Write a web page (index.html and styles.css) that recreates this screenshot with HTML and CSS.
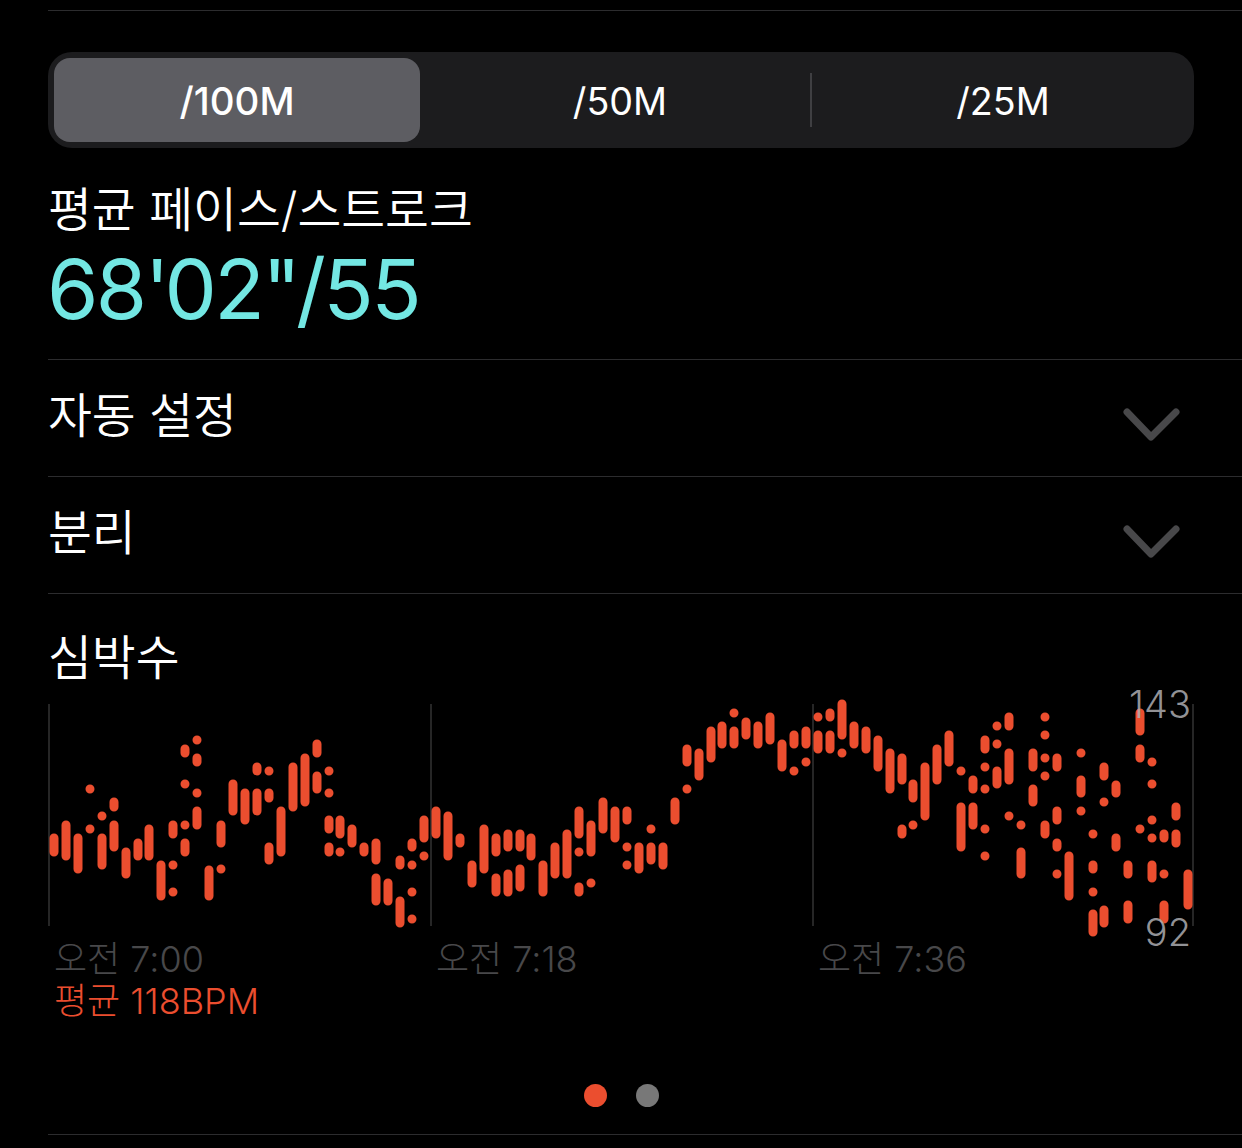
FILE: index.html
```html
<!DOCTYPE html>
<html lang="ko">
<head>
  <meta charset="UTF-8" />
  <meta name="viewport" content="width=device-width, initial-scale=1.0"/>
  <title>수영 기록</title>
  <link rel="stylesheet" href="styles.css">
</head>
<body>
  <div class="page">
    <section class="pace">
      <div class="tabs">
        <div class="tab tab-on">/100M</div>
        <div class="tab tab-mid">/50M</div>
        <div class="tab">/25M</div>
      </div>
      <div class="stat-label">평균 페이스/스트로크</div>
      <div class="stat-value">68<span class="prime">'</span>02<span class="prime">"</span>/55</div>
    </section>

    <section class="row">
      <span>자동 설정</span>
      <svg class="chevron" viewBox="0 0 58 34"><path d="M5 4L29 29L54 4"/></svg>
    </section>

    <section class="row">
      <span>분리</span>
      <svg class="chevron" viewBox="0 0 58 34"><path d="M5 4L29 29L54 4"/></svg>
    </section>

    <section class="heart">
      <h2>심박수</h2>
      <div class="chart">
        <svg class="plot" viewBox="48 704 1146 222">
          <path class="grid-lines" d="M49 704V926M431 704V926M813 704V926M1193 704V926"/>
          <path class="beats" d="M54 838V852M66 825V856M78 838V869M90 789h0M90 829h0M102 816h0M102 838V865M114 802V807M114 825V847M126 852V874M138 843V856M149 829V856M161 865V896M173 825V834M173 865h0M173 892h0M185 749V753M185 784h0M185 825h0M185 843V852M197 740h0M197 758V762M197 793h0M197 811V825M209 870V896M221 825V843M221 869h0M233 784V811M245 793V820M257 767V771M257 793V811M269 771h0M269 793V798M269 847V860M281 811V852M293 767V807M305 758V802M317 744V753M317 776V789M329 771h0M329 793h0M329 820V829M329 847V852M340 820V834M340 852h0M352 829V843M364 847V852M376 843V860M376 878V901M388 883V901M400 860V865M400 901V923M412 843V847M412 865h0M412 892h0M412 919h0M424 820V838M424 856h0M436 811V834M448 816V856M460 838V843M472 865V883M484 829V869M496 838V852M496 878V892M508 834V847M508 874V892M520 834V847M520 869V887M531 838V856M543 865V892M555 847V874M567 834V874M579 811V834M579 852h0M579 887V892M591 825V852M591 883h0M603 802V829M615 811V838M627 811V820M627 847h0M627 865h0M639 847V869M651 829h0M651 847V860M663 847V865M675 802V820M687 749V762M687 789h0M699 753V776M711 731V758M722 726V744M734 713h0M734 731V744M746 722V735M758 726V744M770 717V740M782 744V767M794 735V744M794 771h0M806 731V744M806 762h0M818 717h0M818 735V749M830 713V717M830 735V749M842 704V735M842 753h0M854 726V744M866 731V749M878 740V767M890 753V789M902 758V780M902 829V834M913 784V798M913 825h0M925 767V816M937 749V780M949 735V762M961 771h0M961 807V847M973 780V789M973 807V825M985 740V749M985 767h0M985 789h0M985 829h0M985 856h0M997 726h0M997 744h0M997 771V784M1009 717V726M1009 753V780M1009 816h0M1021 825h0M1021 852V874M1033 753V767M1033 789V802M1045 717h0M1045 735h0M1045 758h0M1045 776h0M1045 825V834M1057 758V767M1057 811V820M1057 843V847M1057 874h0M1069 856V896M1081 753h0M1081 780V793M1081 811h0M1093 834h0M1093 865V869M1093 892h0M1093 914V932M1104 767V776M1104 802h0M1104 910V923M1116 785V793M1116 838V847M1128 865V874M1128 905V919M1140 713V731M1140 749V758M1140 829h0M1152 762h0M1152 784h0M1152 820h0M1152 838h0M1152 865V878M1164 834V838M1164 874h0M1164 905V919M1176 807V816M1176 834V843M1188 874V905"/>
        </svg>
        <span class="y-max">143</span>
        <span class="y-min">92</span>
      </div>
      <div class="times">
        <span>오전 7:00</span>
        <span>오전 7:18</span>
        <span>오전 7:36</span>
      </div>
      <div class="avg">평균 118BPM</div>
      <div class="pager">
        <span class="dot dot-on"></span>
        <span class="dot"></span>
      </div>
    </section>
  </div>
</body>
</html>
```

FILE: styles.css
```css
html, body {
  margin: 0;
  background: #000;
}

body {
  font-family: Inter, "Noto Sans CJK KR", sans-serif;
  color: #fff;
}

.page {
  height: 1148px;
  padding: 10px 0 0 48px;
  box-sizing: border-box;
  overflow: hidden;
}

.pace {
  height: 349px;
  border-top: 1px solid #2c2c2e;
  box-sizing: border-box;
}

.tabs {
  width: 1146px;
  height: 96px;
  margin-top: 41px;
  display: grid;
  grid-template-columns: repeat(3, 1fr);
  background: #1c1c1e;
  border-radius: 24px;
}

.tab {
  display: flex;
  align-items: center;
  justify-content: center;
  padding-top: 2px;
  box-sizing: border-box;
  font-size: 37.7px;
  position: relative;
}

.tab-on {
  margin: 6px 10px 6px 6px;
  background: #5d5d62;
  border-radius: 16px;
  font-size: 38.5px;
  font-weight: 500;
}

.tab-mid {
  padding-right: 2px;
}

.tab-mid::after {
  content: "";
  position: absolute;
  right: 0;
  top: 21px;
  bottom: 21px;
  width: 2px;
  background: #3f3f42;
}

.stat-label {
  margin-top: 29px;
  font-size: 47.7px;
  line-height: 67px;
  font-weight: 350;
}

.stat-value {
  margin-left: -1px;
  font-size: 83px;
  line-height: 90px;
  font-weight: 400;
  letter-spacing: -2.6px;
  color: #73e7e3;
}

.prime {
  letter-spacing: -9px;
  margin-right: 4px;
}

.row {
  height: 117px;
  padding-right: 62px;
  border-top: 1px solid #2c2c2e;
  box-sizing: border-box;
  display: flex;
  align-items: center;
  justify-content: space-between;
  font-size: 47.7px;
  font-weight: 350;
}

.row span {
  margin-top: -11px;
}

.chevron {
  width: 58px;
  height: 34px;
  margin-top: 14px;
}

.chevron path {
  fill: none;
  stroke: #48484a;
  stroke-width: 7;
  stroke-linecap: round;
  stroke-linejoin: round;
}

.heart {
  height: 541px;
  border-top: 1px solid #2c2c2e;
  box-sizing: border-box;
}

.heart h2 {
  margin: 29px 0 0;
  font-size: 47.7px;
  line-height: 70px;
  font-weight: 350;
}

.chart {
  position: relative;
  width: 1146px;
  height: 222px;
  margin-top: 11px;
}

.plot {
  display: block;
  width: 1146px;
  height: 222px;
  overflow: visible;
}

.grid-lines {
  fill: none;
  stroke: #333;
  stroke-width: 1.5;
}

.beats {
  fill: none;
  stroke: #eb4e2f;
  stroke-width: 9;
  stroke-linecap: round;
}

.y-max, .y-min {
  position: absolute;
  right: 3px;
  font-size: 38px;
  font-weight: 300;
  line-height: 40px;
  color: rgba(174, 174, 178, 0.85);
}

.y-max {
  top: -20px;
}

.y-min {
  top: 208px;
}

.times {
  width: 1146px;
  display: grid;
  grid-template-columns: repeat(3, 382px);
  margin-top: 12px;
  font-size: 36px;
  line-height: 42px;
  font-weight: 300;
  color: #48484a;
}

.times span {
  padding-left: 6px;
}

.avg {
  padding-left: 6px;
  font-size: 36px;
  line-height: 42px;
  font-weight: 300;
  color: #eb4e2f;
}

.pager {
  width: 1194px;
  margin-top: 62px;
  padding: 0 48px 27px 0;
  box-sizing: border-box;
  display: flex;
  justify-content: center;
  gap: 29px;
  border-bottom: 1px solid #2c2c2e;
}

.dot {
  width: 23px;
  height: 23px;
  border-radius: 50%;
  background: #787878;
}

.dot-on {
  background: #eb4e2f;
}
```
